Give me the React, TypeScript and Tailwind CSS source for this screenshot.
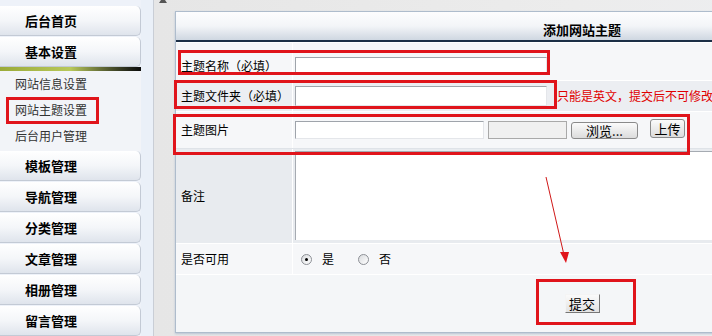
import React from "react";

function NavBtn({ children, gap = true }: { children: React.ReactNode; gap?: boolean }) {
  return (
    <div
      className={
        "h-[30px] shrink-0 rounded-r-[5px] border-r border-b border-[#c3cad5] bg-gradient-to-b from-[#ffffff] via-[#f4f6f9] to-[#dfe4ec] pl-[25px] flex items-center text-[13px] font-bold text-black " +
        (gap ? "mb-[1px]" : "")
      }
    >
      {children}
    </div>
  );
}

function SubItem({ children }: { children: React.ReactNode }) {
  return <div className="h-[26px] flex items-center text-[12px] text-[#333]">{children}</div>;
}

const inputCls =
  "h-[18px] bg-white border border-t-[#9fa4ab] border-l-[#9fa4ab] border-b-[#e4e6ea] border-r-[#e4e6ea]";

function Radio({ checked }: { checked?: boolean }) {
  return (
    <span className="w-[11px] h-[11px] rounded-full border border-[#8d9096] bg-gradient-to-br from-[#d9dbde] to-white flex items-center justify-center">
      {checked && <span className="w-[3px] h-[3px] rounded-full bg-black" />}
    </span>
  );
}

export default function App() {
  return (
    <div className="relative w-[712px] h-[336px] overflow-hidden flex bg-[#eef2f9] font-['SimSun','Noto_Sans_CJK_SC',sans-serif] text-black">
      {/* Sidebar */}
      <div className="w-[141px] shrink-0 flex flex-col pt-[6px]">
        <NavBtn>后台首页</NavBtn>
        <NavBtn gap={false}>基本设置</NavBtn>
        <div className="h-[4px] shrink-0 bg-gradient-to-r from-[#9aaa38] via-[#b8c85a] to-[#0b0b0b]" />
        <div className="h-[80px] shrink-0 bg-[#f2f4f8] pl-[15px] flex flex-col">
          <SubItem>网站信息设置</SubItem>
          <SubItem>网站主题设置</SubItem>
          <SubItem>后台用户管理</SubItem>
        </div>
        <NavBtn>模板管理</NavBtn>
        <NavBtn>导航管理</NavBtn>
        <NavBtn>分类管理</NavBtn>
        <NavBtn>文章管理</NavBtn>
        <NavBtn>相册管理</NavBtn>
        <NavBtn>留言管理</NavBtn>
      </div>

      <div className="w-[12px] shrink-0 bg-[#eaf0f8]" />

      {/* Main area */}
      <div className="relative flex-1 border-l border-[#c9ced6] bg-gradient-to-r from-[#e6e6e6] via-[#ececec] to-[#eef0f4] pl-[21px] pt-[11px]">
        <div className="absolute left-[5px] top-[-3px] w-0 h-0 border-l-[4px] border-r-[4px] border-b-[6px] border-l-transparent border-r-transparent border-b-[#555]" />
        <div className="w-[814px] h-[322px] border border-[#aebccc] bg-[#f4f6f8] shadow-[0_1px_2px_#b8c4d4] flex flex-col">
          {/* header */}
          <div className="h-[28px] shrink-0 bg-gradient-to-b from-[#fdfdfe] via-[#f3f5f8] to-[#cfd7e1] flex items-center justify-center pt-[8px] text-[13px] font-bold">
            添加网站主题
          </div>
          <div className="h-[2px] shrink-0 bg-[#1c2f46]" />

          {/* row 1 */}
          <div className="h-[38px] shrink-0 flex bg-[#f6f7f9] border-t border-white">
            <div className="w-[116px] shrink-0 pl-[5px] pt-[8px] flex items-center text-[12px]">主题名称（必填）</div>
            <div className="flex-1 border-l border-white pl-[2px] pt-[8px] flex items-center">
              <div className={inputCls + " w-[252px]"} />
            </div>
          </div>

          {/* row 2 */}
          <div className="h-[31px] shrink-0 flex bg-[#eceef2] border-t border-white">
            <div className="w-[116px] shrink-0 pl-[5px] flex items-center text-[12px]">主题文件夹（必填）</div>
            <div className="flex-1 border-l border-white pl-[2px] flex items-center">
              <div className={inputCls + " w-[252px] h-[20px]"} />
              <span className="ml-[10px] text-[12px] text-[#e00000] whitespace-nowrap">只能是英文，提交后不可修改</span>
            </div>
          </div>

          {/* row 3 */}
          <div className="h-[37px] shrink-0 flex bg-[#f6f7f9] border-t border-white">
            <div className="w-[116px] shrink-0 pl-[5px] flex items-center text-[12px]">主题图片</div>
            <div className="flex-1 border-l border-white pl-[2px] flex items-center">
              <div className={inputCls + " w-[189px]"} />
              <div className="ml-[4px] w-[79px] h-[18px] bg-[#f0f0f0] border border-[#a9a9a9]" />
              <div className="ml-[4px] w-[67px] h-[17px] rounded-[3px] border border-[#8a8a8a] bg-gradient-to-b from-[#fbfbfb] to-[#dcdcdc] flex items-center justify-center text-[13px] leading-none">
                浏览...
              </div>
              <div className="ml-[12px] -mt-[4px] w-[35px] h-[19px] rounded-[3px] border border-[#8a8a8a] bg-gradient-to-b from-[#fbfbfb] to-[#dcdcdc] flex items-center justify-center text-[13px] leading-none">
                上传
              </div>
            </div>
          </div>

          {/* row 4 */}
          <div className="h-[95px] shrink-0 flex bg-[#e8ebef] border-t border-[#dfe3e8]">
            <div className="w-[116px] shrink-0 pl-[5px] flex items-center text-[12px]">备注</div>
            <div className="flex-1 border-l border-white pl-[2px] pt-[2px] pb-[3px] flex">
              <div className="flex-1 bg-white border-l border-t border-[#a6abb2]" />
            </div>
          </div>

          {/* row 5 */}
          <div className="h-[31px] shrink-0 flex bg-[#f6f7f9] border-t border-white">
            <div className="w-[116px] shrink-0 pl-[5px] flex items-center text-[12px]">是否可用</div>
            <div className="flex-1 border-l border-white pl-[8px] flex items-center text-[12px]">
              <Radio checked />
              <span className="ml-[10px]">是</span>
              <span className="ml-[24px]"><Radio /></span>
              <span className="ml-[10px]">否</span>
            </div>
          </div>

          {/* row 6 */}
          <div className="flex-1 flex items-center justify-center bg-[#f4f6f8] border-t border-white">
            <div className="w-[35px] h-[19px] border border-t-[#f4f4f4] border-l-[#f4f4f4] border-b-[#777] border-r-[#777] bg-gradient-to-b from-[#fafafa] to-[#e3e3e3] flex items-center justify-center text-[13px] leading-none">
              提交
            </div>
          </div>
        </div>
      </div>

      {/* annotation overlays */}
      <div className="absolute left-[6px] top-[97px] w-[93px] h-[27px] border-[3px] border-[#e0141b]" />
      <div className="absolute left-[178px] top-[50px] w-[372px] h-[25px] border-[3px] border-[#e0141b]" />
      <div className="absolute left-[174px] top-[80px] w-[383px] h-[29px] border-[3px] border-[#e0141b]" />
      <div className="absolute left-[173px] top-[114px] w-[517px] h-[41px] border-[3px] border-[#e0141b]" />
      <div className="absolute left-[536px] top-[279px] w-[100px] h-[46px] border-[3px] border-[#e0141b]" />
      <svg className="absolute left-0 top-0" width="712" height="336" viewBox="0 0 712 336">
        <line x1="546" y1="177" x2="564" y2="255" stroke="#d01818" strokeWidth="1" />
        <polygon points="560,252 569,252 566,263" fill="#e0141b" />
      </svg>
    </div>
  );
}
